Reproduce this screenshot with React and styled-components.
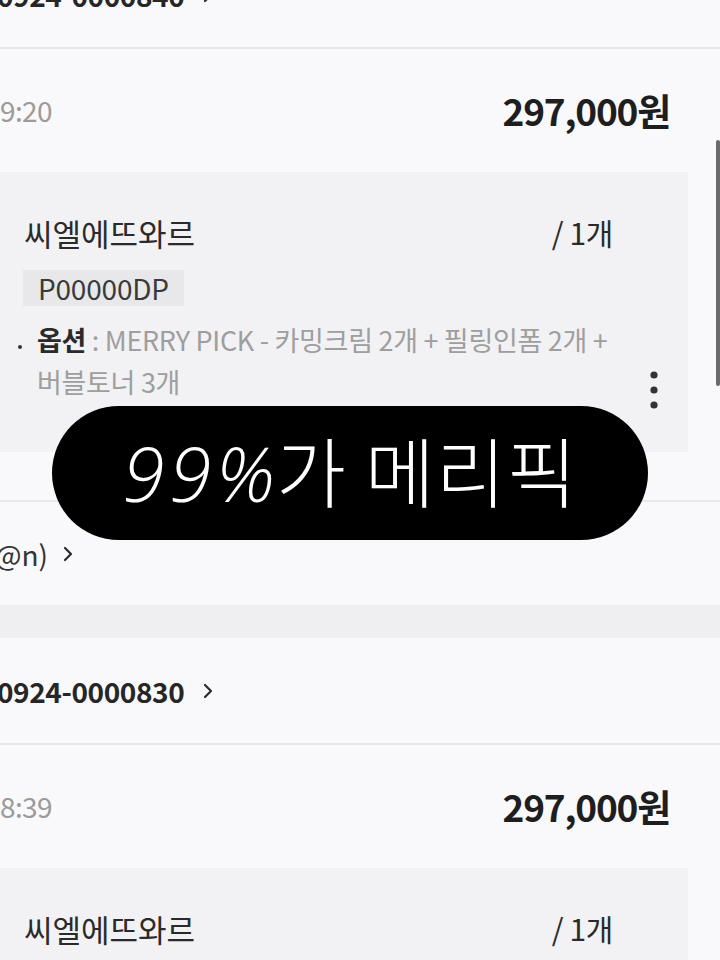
import styled, { createGlobalStyle } from "styled-components";

const GlobalStyle = createGlobalStyle`
  html, body {
    margin: 0;
    padding: 0;
    background: #f9f8fa;
  }
  * {
    box-sizing: border-box;
  }
`;

const orders = [
  { no: "0924-0000840", time: "9:20", price: "297,000원", buyer: "@n)" },
  { no: "0924-0000830", time: "8:39", price: "297,000원", buyer: "@n)" },
];

function Chevron() {
  return (
    <svg width="12" height="16" viewBox="0 0 12 16">
      <polyline
        points="3,2 9,8 3,14"
        fill="none"
        stroke="#2b2b2b"
        strokeWidth="2.2"
        strokeLinecap="round"
        strokeLinejoin="round"
      />
    </svg>
  );
}

function Kebab() {
  return (
    <svg width="10" height="40" viewBox="0 0 10 40">
      <circle cx="5" cy="5" r="3.6" fill="#333" />
      <circle cx="5" cy="20" r="3.6" fill="#333" />
      <circle cx="5" cy="35" r="3.6" fill="#333" />
    </svg>
  );
}

function Order({ order, first }) {
  return (
    <section>
      <OrderHead first={first}>
        <OrderNo>{order.no}</OrderNo>
        <Chevron />
      </OrderHead>
      <Divider />
      <SummaryRow>
        <Time>{order.time}</Time>
        <Price>{order.price}</Price>
      </SummaryRow>
      <Card>
        <Info>
          <NameRow>
            <ItemName>씨엘에뜨와르</ItemName>
            <Qty>/ 1개</Qty>
          </NameRow>
          <Tag>P00000DP</Tag>
          <OptionLine>
            <Bullet />
            <OptionText>
              <b>옵션</b> : MERRY PICK - 카밍크림 2개 + 필링인폼 2개 +
              <br />
              버블토너 3개
            </OptionText>
          </OptionLine>
        </Info>
        <Side>
          <Kebab />
        </Side>
      </Card>
      <Divider spaced />
      <BuyerRow>
        <BuyerText>{order.buyer}</BuyerText>
        <Chevron />
      </BuyerRow>
    </section>
  );
}

export default function App() {
  return (
    <Page>
      <GlobalStyle />
      <Order order={orders[0]} first />
      <Band />
      <Order order={orders[1]} />
      <Scrollbar />
      <Pill>
        <PillText>
          <Italic>99%</Italic>가 메리픽
        </PillText>
      </Pill>
    </Page>
  );
}

const Page = styled.div`
  position: relative;
  width: 720px;
  height: 960px;
  overflow: hidden;
  background: #f9f8fa;
  font-family: "Noto Sans CJK KR", "Noto Sans", sans-serif;
  color: #222;
`;

const OrderHead = styled.div`
  height: 105px;
  margin-top: ${(p) => (p.first ? "-58px" : "0")};
  display: flex;
  align-items: center;
  gap: 18px;
`;

const OrderNo = styled.span`
  font-size: 28px;
  font-weight: 700;
  color: #262626;
  letter-spacing: -0.4px;
  margin-left: -3px;
`;

const Divider = styled.div`
  height: 2px;
  background: #e8e7ea;
  margin-top: ${(p) => (p.spaced ? "48px" : "0")};
`;

const SummaryRow = styled.div`
  display: flex;
  justify-content: space-between;
  align-items: center;
  height: 40px;
  margin: 41px 50px 42px 0;
`;

const Time = styled.span`
  font-size: 28px;
  color: #9b9b9b;
  letter-spacing: -0.6px;
`;

const Price = styled.span`
  font-size: 37px;
  font-weight: 700;
  color: #1e1e1e;
  letter-spacing: -1.2px;
`;

const Card = styled.div`
  display: flex;
  height: 280px;
  margin-right: 32px;
  padding: 40px 0 42px 24px;
  background: #f2f1f4;
`;

const Info = styled.div`
  flex: 1;
  padding-right: 7px;
  display: flex;
  flex-direction: column;
  align-items: flex-start;
`;

const NameRow = styled.div`
  width: 100%;
  height: 40px;
  display: flex;
  justify-content: space-between;
  align-items: center;
`;

const ItemName = styled.span`
  font-size: 31px;
  color: #2a2a2a;
  letter-spacing: 0;
`;

const Qty = styled.span`
  font-size: 30px;
  color: #2a2a2a;
  letter-spacing: -0.4px;
`;

const Tag = styled.span`
  margin-top: 18px;
  margin-left: -1px;
  height: 36px;
  padding: 0 15px;
  display: inline-flex;
  align-items: center;
  background: #e8e8ea;
  font-size: 28px;
  color: #3a3a3a;
  letter-spacing: -0.2px;
`;

const OptionLine = styled.div`
  margin-top: 13px;
  display: flex;
  align-items: flex-start;
  margin-left: -6px;
`;

const Bullet = styled.span`
  width: 4px;
  height: 4px;
  border-radius: 50%;
  background: #333;
  margin-top: 26px;
  margin-right: 15px;
  flex-shrink: 0;
`;

const OptionText = styled.p`
  margin: 0;
  font-size: 27px;
  line-height: 42px;
  color: #9e9e9e;
  letter-spacing: -0.3px;
  white-space: nowrap;

  b {
    color: #2a2a2a;
    font-weight: 700;
  }
`;

const Side = styled.div`
  width: 68px;
  display: flex;
  justify-content: center;
  align-items: flex-end;
`;

const BuyerRow = styled.div`
  height: 103px;
  display: flex;
  align-items: center;
  gap: 14px;
`;

const BuyerText = styled.span`
  font-size: 28px;
  color: #333;
  margin-left: -5px;
`;

const Band = styled.div`
  height: 33px;
  background: #efeef1;
`;

const Scrollbar = styled.div`
  position: absolute;
  top: 140px;
  right: 0;
  width: 4px;
  height: 246px;
  border-radius: 2px;
  background: #6a6a6a;
`;

const Pill = styled.div`
  position: absolute;
  left: 52px;
  top: 406px;
  width: 596px;
  height: 134px;
  border-radius: 67px;
  background: #000;
  display: flex;
  align-items: center;
  justify-content: center;
`;

const PillText = styled.span`
  color: #fff;
  font-size: 76px;
  font-weight: 300;
  letter-spacing: 1px;
  line-height: 1;
  margin-top: -4px;
`;

const Italic = styled.i`
  font-family: "Open Sans", "Noto Sans", sans-serif;
  font-weight: 300;
  font-style: italic;
  letter-spacing: 5px;
  margin-right: -4px;
`;
